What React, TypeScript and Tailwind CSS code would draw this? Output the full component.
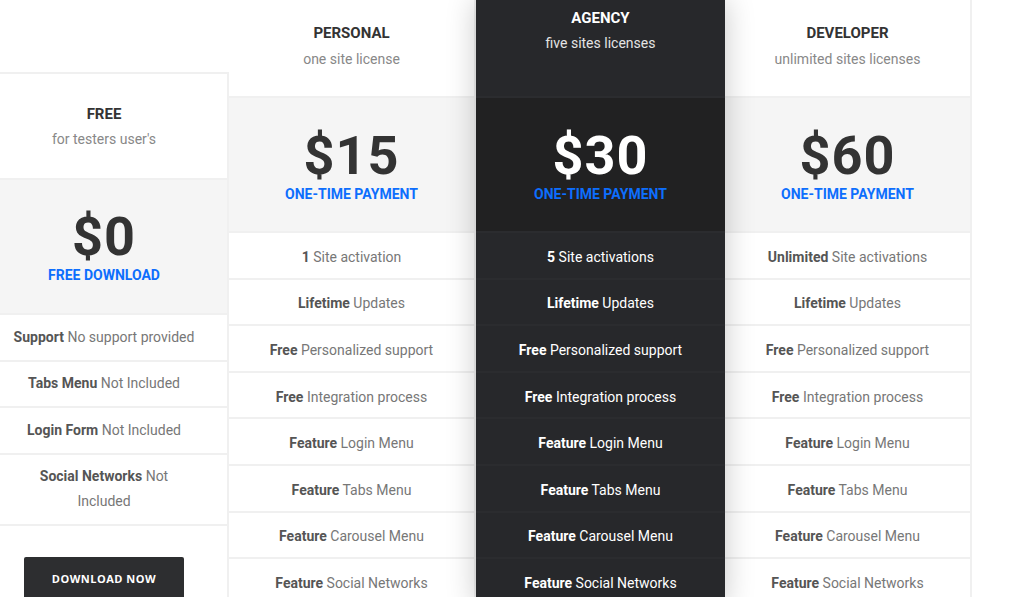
import React from 'react';

type Feature = { strong: string; text: string };

interface Plan {
    name: string;
    license: string;
    price: string;
    note: string;
    features: Feature[];
    dark?: boolean;
}

const paidFeatures = (first: string, label: string): Feature[] => [
    { strong: first, text: label },
    { strong: 'Lifetime', text: 'Updates' },
    { strong: 'Free', text: 'Personalized support' },
    { strong: 'Free', text: 'Integration process' },
    { strong: 'Feature', text: 'Login Menu' },
    { strong: 'Feature', text: 'Tabs Menu' },
    { strong: 'Feature', text: 'Carousel Menu' },
    { strong: 'Feature', text: 'Social Networks' },
];

const plans: Plan[] = [
    { name: 'PERSONAL', license: 'one site license', price: '$15', note: 'ONE-TIME PAYMENT', features: paidFeatures('1', 'Site activation') },
    { name: 'AGENCY', license: 'five sites licenses', price: '$30', note: 'ONE-TIME PAYMENT', features: paidFeatures('5', 'Site activations'), dark: true },
    { name: 'DEVELOPER', license: 'unlimited sites licenses', price: '$60', note: 'ONE-TIME PAYMENT', features: paidFeatures('Unlimited', 'Site activations') },
];

const freeFeatures: Feature[] = [
    { strong: 'Support', text: 'No support provided' },
    { strong: 'Tabs Menu', text: 'Not Included' },
    { strong: 'Login Form', text: 'Not Included' },
    { strong: 'Social Networks', text: 'Not Included' },
];

function FreeColumn() {
    // column bleeds off the left edge a little, as in the original page
    return (
        <div className="w-[248px] shrink-0 ml-[-19px] mt-[72px] border-t-2 border-r-2 border-[#f0f0f0] flex flex-col">
            {/* Header */}
            <div className="h-[106px] pt-[3px] flex flex-col items-center justify-center border-b-2 border-[#f0f0f0]">
                <span className="text-[15px] font-bold text-[#333] leading-[20px]">FREE</span>
                <span className="text-[14px] text-[#888] leading-[24px] mt-[3px]">for testers user's</span>
            </div>

            {/* Price */}
            <div className="h-[135px] pt-[2px] bg-[#f5f5f5] flex flex-col items-center justify-center border-b-2 border-[#f0f0f0]">
                <span className="text-[54px] font-bold text-[#333] leading-[52px] tracking-[1px]">$0</span>
                <span className="text-[14px] font-bold text-[#0d6efd] leading-[20px] mt-[2px]">FREE DOWNLOAD</span>
            </div>

            {/* Features */}
            {freeFeatures.map((f, i) => (
                <div
                    key={i}
                    className={`${i === freeFeatures.length - 1 ? 'h-[71px]' : 'h-[46.5px]'} px-[32px] flex items-center justify-center text-center border-b-2 border-[#f0f0f0] text-[14px] leading-[25px] text-[#777]`}
                >
                    <span>
                        <b className="font-bold text-[#555]">{f.strong}</b> {f.text}
                    </span>
                </div>
            ))}

            {/* Action */}
            <div className="pt-[31px] flex justify-center">
                <button className="w-[160px] h-[46px] bg-[#2d2e30] rounded-[2px] text-white text-[11px] font-bold tracking-[0.5px] font-['Open_Sans',sans-serif]">
                    DOWNLOAD NOW
                </button>
            </div>
        </div>
    );
}

function PlanColumn({ plan, width }: { plan: Plan; width: string }) {
    const dark = plan.dark;
    const line = dark ? 'border-[#2b2c2f]' : 'border-[#f0f0f0]';
    return (
        <div
            className={`${width} shrink-0 flex flex-col ${
                dark ? 'bg-[#27282b] relative z-10 shadow-[0_0_28px_rgba(0,0,0,0.22)]' : 'bg-white border-r-2 border-[#f0f0f0]'
            }`}
        >
            {/* Header */}
            <div className={`h-[98px] flex flex-col items-center ${dark ? 'pt-[8px]' : 'pt-[23px]'} border-b-2 ${line}`}>
                <span className={`text-[15px] font-bold leading-[20px] ${dark ? 'text-white' : 'text-[#333]'}`}>{plan.name}</span>
                <span className={`text-[14px] leading-[24px] ${dark ? 'mt-[3px] text-[#e4e4e4]' : 'mt-[4px] text-[#888]'}`}>{plan.license}</span>
            </div>

            {/* Price */}
            <div className={`h-[135px] pt-[4px] flex flex-col items-center justify-center border-b-2 ${line} ${dark ? 'bg-[#212122]' : 'bg-[#f5f5f5]'}`}>
                <span className={`text-[54px] font-bold leading-[52px] tracking-[1px] ${dark ? 'text-white' : 'text-[#333]'}`}>{plan.price}</span>
                <span className="text-[14px] font-bold text-[#0d6efd] leading-[20px] mt-[2px]">{plan.note}</span>
            </div>

            {/* Features */}
            {plan.features.map((f, i) => (
                <div
                    key={i}
                    className={`h-[46.6px] shrink-0 pt-[4px] flex items-center justify-center border-b-2 ${line} text-[14px] leading-[25px] ${dark ? 'text-white' : 'text-[#777]'}`}
                >
                    <span>
                        <b className={`font-bold ${dark ? 'text-white' : 'text-[#555]'}`}>{f.strong}</b> {f.text}
                    </span>
                </div>
            ))}
        </div>
    );
}

export default function App() {
    return (
        <div className="w-[1024px] h-[597px] overflow-hidden bg-white font-['Roboto',sans-serif]">
            <div className="flex items-start">
                <FreeColumn />
                <PlanColumn plan={plans[0]} width="w-[247px]" />
                <PlanColumn plan={plans[1]} width="w-[249px]" />
                <PlanColumn plan={plans[2]} width="w-[247px]" />
            </div>
        </div>
    );
}
